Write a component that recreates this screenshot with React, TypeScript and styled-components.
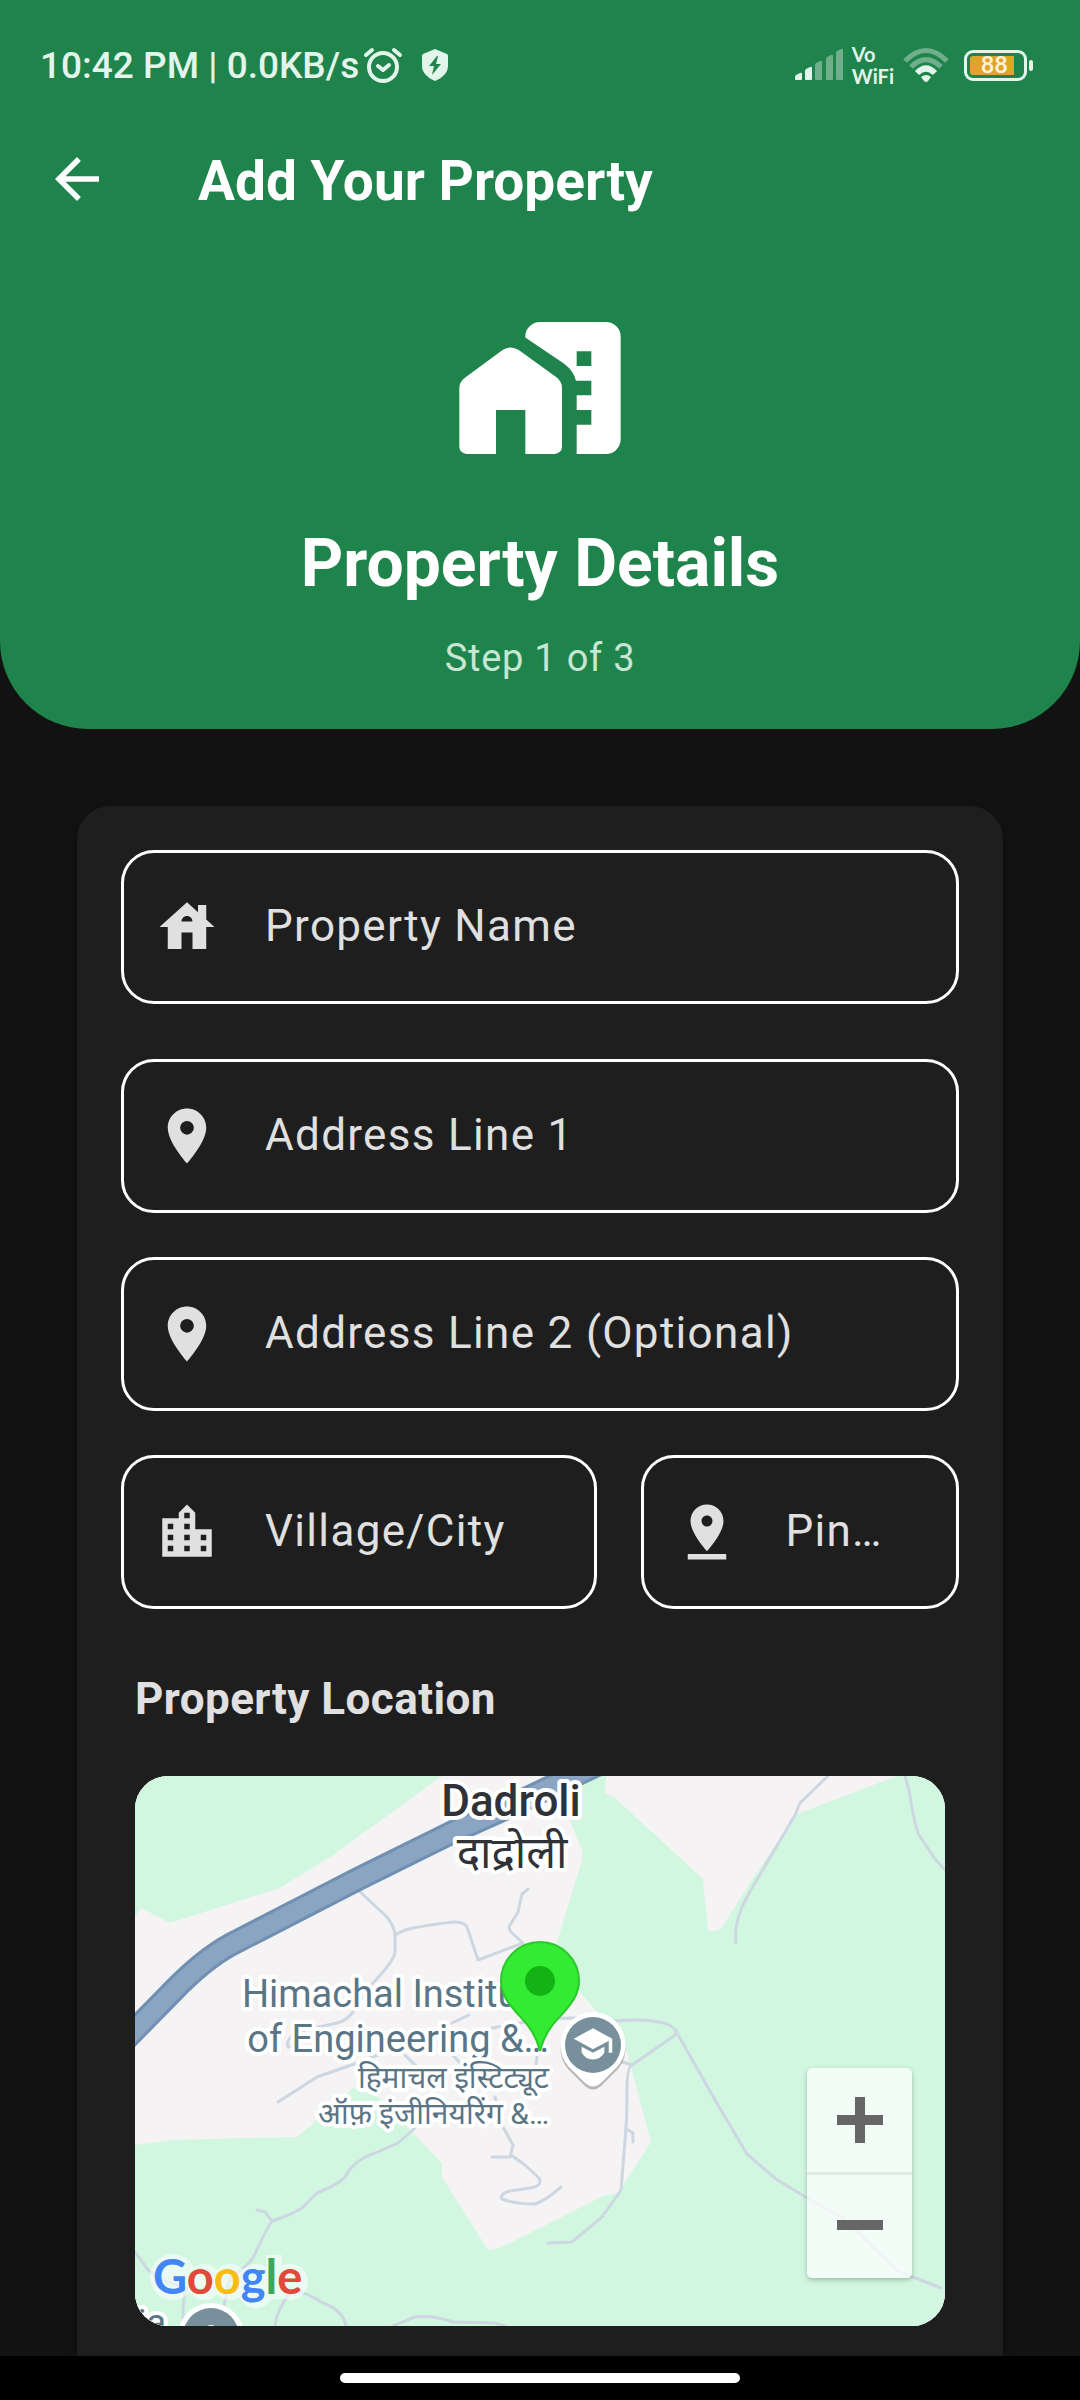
import React from "react";
import styled, { createGlobalStyle } from "styled-components";
import {
  MdArrowBack,
  MdHouse,
  MdLocationCity,
  MdLocationOn,
  MdPinDrop,
} from "react-icons/md";
import type { IconType } from "react-icons";

const color = {
  green: "#1f834c",
  page: "#121212",
  card: "#1e1e1e",
  text: "#e0e0e0",
  status: "#e3f5ea",
  statusDim: "#6faf8c",
  mapLand: "#f5f3f4",
  mapGreen: "#d2f7e1",
  mapRoad: "#cdd7e1",
  poi: "#5a7585",
  poiPin: "#78909c",
};

const GlobalStyle = createGlobalStyle`
  *, *::before, *::after { box-sizing: border-box; }
  body {
    margin: 0;
    background: ${color.page};
    font-family: Roboto, "Noto Sans", sans-serif;
  }
`;

const Screen = styled.div`
  min-height: 100vh;
  display: flex;
  flex-direction: column;
  background: ${color.page};
`;

const Header = styled.header`
  background: ${color.green};
  border-radius: 0 0 88px 88px;
  color: #fff;
`;

const StatusBar = styled.div`
  display: flex;
  align-items: center;
  justify-content: space-between;
  height: 102px;
  padding: 28px 47px 0 40px;
  color: ${color.status};
`;

const StatusGroup = styled.div<{ $gap: number }>`
  display: flex;
  align-items: center;
  gap: ${(p) => p.$gap}px;
`;

const StatusText = styled.span`
  padding-top: 2px;
  font-size: 37px;
  line-height: 44px;
  font-weight: 500;
  white-space: nowrap;
`;

const AlarmIcon = styled.svg`
  width: 40px;
  height: 40px;
  margin-left: 4px;
`;

const ShieldIcon = styled.svg`
  width: 28px;
  height: 34px;
  margin-left: 18px;
`;

const VoWifi = styled.span`
  display: flex;
  flex-direction: column;
  font-family: Lato, sans-serif;
  font-size: 20px;
  line-height: 22px;
  font-weight: 700;
`;

const Battery = styled.span`
  display: flex;
  align-items: center;
  gap: 2px;
  margin-left: 6px;

  &::after {
    content: "";
    width: 4px;
    height: 11px;
    border-radius: 2px;
    background: ${color.status};
  }
`;

const BatteryBody = styled.span`
  display: flex;
  width: 63px;
  height: 31px;
  padding: 3px;
  border: 3px solid ${color.status};
  border-radius: 9px;
`;

const BatteryFill = styled.span`
  display: flex;
  align-items: center;
  justify-content: flex-end;
  width: 44px;
  padding-right: 6px;
  border-radius: 3px 0 0 3px;
  background: #e0a32c;
  color: #fff3d6;
  font-size: 24px;
  line-height: 20px;
  font-weight: 500;
`;

const AppBar = styled.div`
  display: flex;
  align-items: center;
  gap: 88px;
  height: 154px;
  padding: 0 44px;
`;

const BackButton = styled.button`
  display: flex;
  padding: 0;
  border: 0;
  background: none;
  color: inherit;
  font-size: 66px;
  cursor: pointer;
`;

const AppTitle = styled.h1`
  margin: 0;
  padding-top: 3px;
  font-size: 55px;
  line-height: 66px;
  font-weight: 700;
`;

const Hero = styled.div`
  display: flex;
  flex-direction: column;
  align-items: center;
  padding: 44px 44px 49px;
`;

const HeroIcon = styled.svg`
  width: 176px;
  height: 176px;
  fill: #fff;
`;

const HeroTitle = styled.h2`
  margin: 44px 0 28px;
  font-size: 66px;
  line-height: 88px;
  font-weight: 700;
`;

const Step = styled.p`
  margin: 0;
  font-size: 38px;
  line-height: 44px;
  letter-spacing: 0.02em;
  color: #c7e6d3;
`;

const Card = styled.form`
  flex: 1;
  margin: 77px 77px 0;
  padding: 44px 44px 30px;
  border-radius: 33px 33px 0 0;
  background: ${color.card};
  box-shadow: 0 3px 8px rgba(0, 0, 0, 0.3);
`;

const Fields = styled.div`
  display: flex;
  flex-direction: column;
  gap: 44px;
`;

const NameBlock = styled.div`
  padding-bottom: 11px;
`;

const FieldRow = styled.div`
  display: grid;
  grid-template-columns: minmax(0, 3fr) minmax(0, 2fr);
  gap: 44px;
`;

const FieldBox = styled.label`
  display: flex;
  align-items: center;
  gap: 45px;
  height: 154px;
  padding: 0 30px;
  border: 3px solid #fff;
  border-radius: 33px;
  color: ${color.text};

  svg {
    flex: none;
    font-size: 66px;
  }
`;

const FieldInput = styled.input`
  flex: 1;
  min-width: 0;
  height: 66px;
  padding: 0 0 2px;
  border: 0;
  outline: 0;
  background: none;
  color: ${color.text};
  font-family: inherit;
  font-size: 44px;
  letter-spacing: 0.03em;
  text-overflow: ellipsis;

  &::placeholder {
    color: ${color.text};
    opacity: 1;
  }
`;

const LocationSection = styled.section`
  display: flex;
  flex-direction: column;
  gap: 51px;
  margin-top: 64px;
  padding: 0 14px;
`;

const SectionTitle = styled.h3`
  margin: 0;
  font-size: 44px;
  line-height: 52px;
  font-weight: 700;
  letter-spacing: 0.01em;
  color: ${color.text};
`;

const MapFrame = styled.div`
  position: relative;
  height: 550px;
  border-radius: 33px;
  overflow: hidden;
  background: ${color.mapLand};
`;

const MapSvg = styled.svg`
  display: block;
  width: 100%;
  height: 100%;
  font-family: Roboto, "Noto Sans", "Noto Sans Devanagari", sans-serif;
`;

const MapLabel = styled.text`
  paint-order: stroke;
  stroke: #fff;
  stroke-width: 8px;
  stroke-linejoin: round;
`;

const LogoText = styled.text`
  font-family: Lato, sans-serif;
  font-size: 47px;
  font-weight: 700;
`;

const ZoomControl = styled.div`
  position: absolute;
  right: 33px;
  bottom: 48px;
  width: 105px;
  border-radius: 5px;
  background: rgba(255, 255, 255, 0.72);
  box-shadow: 0 2px 5px rgba(0, 0, 0, 0.25);
`;

const ZoomButton = styled.button`
  display: flex;
  align-items: center;
  justify-content: center;
  width: 100%;
  height: 104px;
  padding: 0;
  border: 0;
  background: none;
  cursor: pointer;

  & + & {
    height: 106px;
    padding-bottom: 3px;
    border-top: 3px solid #e1e9e4;
  }

  svg {
    width: 46px;
    height: 46px;
    fill: #666;
  }
`;

const NavBar = styled.footer`
  display: flex;
  align-items: center;
  justify-content: center;
  height: 44px;
  background: #000;
`;

const HomeHandle = styled.div`
  width: 400px;
  height: 10px;
  border-radius: 5px;
  background: #fff;
`;

type FieldProps = {
  icon: IconType;
  label: string;
  placeholder?: string;
};

const Field = ({ icon: Icon, label, placeholder }: FieldProps) => (
  <FieldBox>
    <Icon aria-hidden />
    <FieldInput type="text" aria-label={label} placeholder={placeholder ?? label} />
  </FieldBox>
);

const roads = [
  "M222 113L252 141Q260 152 260 159V177Q258 186 237 208L218 236Q210 246 202 247L170 254Q150 260 153 271L162 270",
  "M260 159Q268 154 278 152Q300 148 318 146Q330 146 332 151L343 184L388 167L376 156Q373 152 375 149L383 136L387 118L393 113",
  "M317 247L334 239",
  "M357 252L385 247Q405 242 440 242L482 245Q512 242 532 248Q548 255 536 262L497 289Q491 292 492 324Q492 345 490 364L486 414L467 441L437 466L413 467",
  "M484 285L497 289",
  "M491 353L498 357V366",
  "M541 255L580 324L612 378L641 403L672 422L708 442L763 495L806 512",
  "M693 0L665 27L660 39L613 119Q598 146 601 167",
  "M770 0L774 14L776 27Q780 50 784 59L800 83L810 94",
  "M402 281L401 289",
  "M360 321L368 351L378 369L375 381H357",
  "M376 379L390 389L404 402Q408 410 395 412L375 415Q364 418 367 423Q380 428 400 428Q410 425 426 411",
  "M270 279L283 292",
  "M318 279L325 287",
  "M143 326L182 301L222 287L243 279",
  "M280 352L263 367Q255 371 230 381Q215 390 210 401Q204 408 182 417L167 432Q158 438 137 445Q132 452 118 482Q112 491 95 501Q91 520 85 550",
  "M122 434L130 436L137 445",
  "M0 476L13 494Q25 505 52 512Q46 528 49 550",
  "M140 550Q141 535 155 517Q165 512 188 527Q208 534 211 550",
  "M258 550L280 541Q298 539 318 546L360 547L370 550",
];

const LocationMap = () => (
  <MapSvg viewBox="0 0 810 550" preserveAspectRatio="xMidYMid slice" role="img" aria-label="Map of Dadroli">
    <rect width="810" height="550" fill={color.mapLand} />
    <path
      fill={color.mapGreen}
      d="M0 0H307L198 79L145 112L113 122L35 147L6 132L0 141Z"
    />
    <path
      fill={color.mapGreen}
      d="M471 0L470 17L480 22L568 103L573 155H580L586 153L620 99L662 38L762 0H810V550H0V369L38 364L110 362L162 361L182 344L218 312L243 321L307 387V401L353 474L365 472L468 420L483 417L516 366L495 287L484 250L462 236L445 216L422 166L447 84V74L435 44L448 0Z"
    />
    <g fill="none" stroke={color.mapRoad} strokeWidth="3" strokeLinejoin="round" strokeLinecap="round">
      {roads.map((d) => (
        <path key={d} d={d} />
      ))}
    </g>
    <g fill="none" strokeLinejoin="round">
      <path stroke="#7090b3" strokeWidth="24" d="M-12 266L38 215Q68 184 95 169L223 103L318 56L365 35L464 -12" />
      <path stroke="#8aa4c1" strokeWidth="18" d="M-12 266L38 215Q68 184 95 169L223 103L318 56L365 35L464 -12" />
    </g>

    <g fill="#2f3338" textAnchor="middle">
      <MapLabel x="376" y="40" fontSize="44" fontWeight="500">Dadroli</MapLabel>
      <MapLabel x="377" y="92" fontSize="44">दाद्रोली</MapLabel>
    </g>
    <g fill={color.poi} textAnchor="end">
      <MapLabel x="416" y="231" fontSize="38">Himachal Institute</MapLabel>
      <MapLabel x="414" y="276" fontSize="38">of Engineering &amp;…</MapLabel>
      <MapLabel x="414" y="312" fontSize="30">हिमाचल इंस्टिट्यूट</MapLabel>
      <MapLabel x="414" y="348" fontSize="30">ऑफ़ इंजीनियरिंग &amp;…</MapLabel>
    </g>
    <MapLabel x="31" y="559" fontSize="36" textAnchor="end" fill={color.poi}>ia</MapLabel>

    <g>
      <circle cx="76" cy="560" r="33" fill="#fff" />
      <circle cx="76" cy="560" r="28" fill={color.poiPin} />
      <circle cx="76" cy="556" r="7" fill="#fff" />
    </g>

    <g fill="#fff" opacity="0.55">
      <circle cx="38" cy="501" r="23" />
      <circle cx="69" cy="506" r="18" />
      <circle cx="95" cy="506" r="18" />
      <circle cx="121" cy="506" r="18" />
      <circle cx="121" cy="514" r="18" />
      <rect x="131" y="479" width="16" height="44" />
      <circle cx="155" cy="506" r="18" />
    </g>
    <LogoText x="18" y="518">
      <tspan fill="#4285f4">G</tspan>
      <tspan fill="#e04a3c">o</tspan>
      <tspan fill="#f8bd15">o</tspan>
      <tspan fill="#4285f4">g</tspan>
      <tspan fill="#3ba757">l</tspan>
      <tspan fill="#e04a3c">e</tspan>
    </LogoText>

    <g>
      <path
        fill="#000"
        opacity="0.25"
        d="M458 239a33 33 0 0 1 25 54L466 310Q458 317 450 310L433 293A33 33 0 0 1 458 239z"
      />
      <path
        fill="#fff"
        d="M458 236a33 33 0 0 1 25 54L466 307Q458 314 450 307L433 290A33 33 0 0 1 458 236z"
      />
      <circle cx="458" cy="269" r="28" fill={color.poiPin} />
      <path
        fill="#fff"
        transform="translate(437 247) scale(1.75)"
        d="M12 3L1 9l11 6 9-4.91V17h2V9zM5.500 13.500v3.400Q7.500 20.800 12 20.800t6.500-3.900v-3.400L12 17z"
      />
    </g>

    <path
      fill="#34eb34"
      stroke="#2bc92b"
      strokeWidth="2"
      d="M405 275C400 255 390 246 381 236C372 226 366 217 366 205a39 39 0 0 1 78 0C444 217 438 226 429 236C420 246 410 255 405 275z"
    />
    <circle cx="405" cy="205" r="15" fill="#13b313" />
  </MapSvg>
);

const signalBars = [
  { x: 0, top: 24, on: true },
  { x: 10, top: 18, on: true },
  { x: 20, top: 12, on: false },
  { x: 31, top: 6, on: false },
  { x: 41, top: 0, on: false },
];

export default function App() {
  return (
    <Screen>
      <GlobalStyle />
      <Header>
        <StatusBar>
          <StatusGroup $gap={0}>
            <StatusText>10:42 PM | 0.0KB/s</StatusText>
            <AlarmIcon viewBox="0 0 40 40" fill="none" stroke="currentColor" strokeWidth="4" strokeLinecap="round" strokeLinejoin="round" aria-hidden>
              <circle cx="20" cy="22" r="14" />
              <path d="M15 21l5 4 6-5" />
              <path d="M3 10l6-5M37 10l-6-5" />
            </AlarmIcon>
            <ShieldIcon viewBox="0 0 28 34" aria-hidden>
              <path fill="currentColor" d="M14 1l12 5q1 .5 1 2v10c0 7-6 12-13 15C7 30 1 25 1 18V8q0-1.500 1-2z" />
              <path fill={color.green} d="M16 8L8 18h5l-2 9 9-11h-5l2-8z" />
            </ShieldIcon>
          </StatusGroup>
          <StatusGroup $gap={9}>
            <svg width="48" height="32" viewBox="0 0 48 32" aria-hidden>
              {signalBars.map((b) => (
                <path
                  key={b.x}
                  fill={b.on ? color.status : color.statusDim}
                  d={`M${b.x} 30V${b.top + 4}q0-1 1-2l4-2q2-1 2 1V30q0 1-1 1H${b.x + 1}q-1 0-1-1z`}
                />
              ))}
            </svg>
            <VoWifi>
              <span>Vo</span>
              <span>WiFi</span>
            </VoWifi>
            <svg width="46" height="34" viewBox="0 0 46 34" fill="none" strokeWidth="5" aria-hidden>
              <path stroke={color.statusDim} d="M2 13Q23 -8 44 13" />
              <path stroke={color.statusDim} d="M8 19Q23 4 38 19" />
              <path stroke={color.status} strokeWidth="6" d="M14 25Q23 16 32 25" />
              <path fill={color.status} d="M18 29q5-4 10 0l-3 4q-2 2-4 0z" />
            </svg>
            <Battery>
              <BatteryBody>
                <BatteryFill>88</BatteryFill>
              </BatteryBody>
            </Battery>
          </StatusGroup>
        </StatusBar>
        <AppBar>
          <BackButton type="button" aria-label="Back">
            <MdArrowBack />
          </BackButton>
          <AppTitle>Add Your Property</AppTitle>
        </AppBar>
        <Hero>
          <HeroIcon viewBox="0 0 24 24" aria-hidden>
            <path d="M1 12Q1 11.100 1.900 10.500L6.900 6.830Q8 6.100 9.100 6.830L14.200 10.500Q15 11.100 15 12V20a1 1 0 0 1-1 1h-4v-6H6v6H2a1 1 0 0 1-1-1z" />
            <path
              fillRule="evenodd"
              d="M10 5.100L15.300 8.700Q16.600 9.700 16.900 11H19v2h-2v2h2v2h-2v4h4a2 2 0 0 0 2-2V5a2 2 0 0 0-2-2h-9a2 2 0 0 0-2 2zM17 7h2v2h-2z"
            />
          </HeroIcon>
          <HeroTitle>Property Details</HeroTitle>
          <Step>Step 1 of 3</Step>
        </Hero>
      </Header>

      <Card>
        <Fields>
          <NameBlock>
            <Field icon={MdHouse} label="Property Name" />
          </NameBlock>
          <Field icon={MdLocationOn} label="Address Line 1" />
          <Field icon={MdLocationOn} label="Address Line 2 (Optional)" />
          <FieldRow>
            <Field icon={MdLocationCity} label="Village/City" />
            <Field icon={MdPinDrop} label="Pin Code" placeholder="Pin…" />
          </FieldRow>
        </Fields>
        <LocationSection>
          <SectionTitle>Property Location</SectionTitle>
          <MapFrame>
            <LocationMap />
            <ZoomControl>
              <ZoomButton type="button" aria-label="Zoom in">
                <svg viewBox="0 0 46 46" aria-hidden>
                  <path d="M18 0h10v18h18v10H28v18H18V28H0V18h18z" />
                </svg>
              </ZoomButton>
              <ZoomButton type="button" aria-label="Zoom out">
                <svg viewBox="0 0 46 46" aria-hidden>
                  <path d="M0 18h46v10H0z" />
                </svg>
              </ZoomButton>
            </ZoomControl>
          </MapFrame>
        </LocationSection>
      </Card>

      <NavBar>
        <HomeHandle />
      </NavBar>
    </Screen>
  );
}
